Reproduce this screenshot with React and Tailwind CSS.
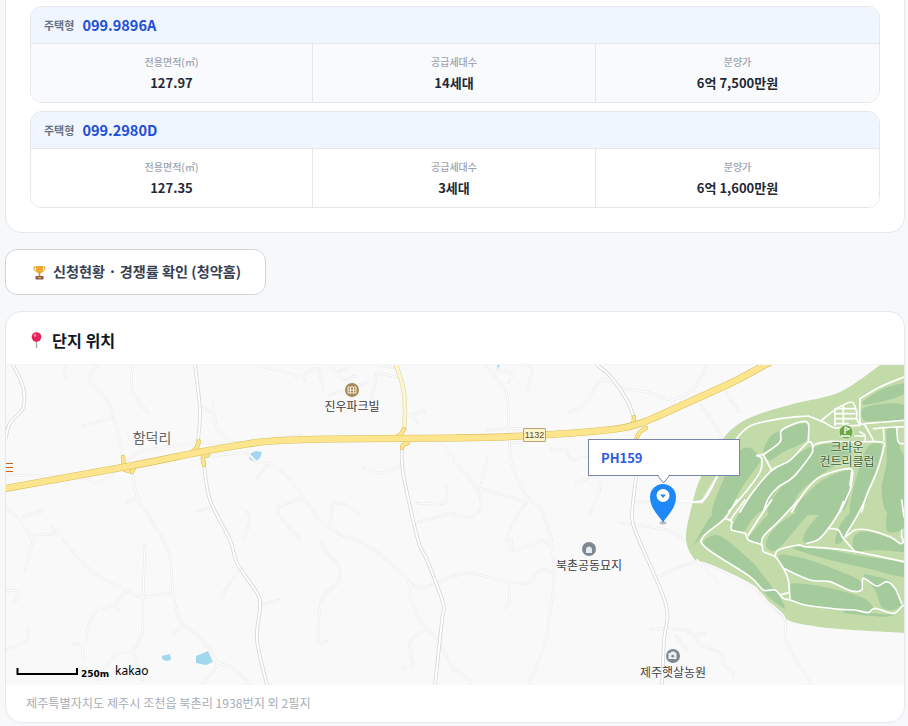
import React from "react";

function sm(p, closed = false) {
  const pts = [];
  for (let i = 0; i < p.length; i += 2) pts.push([p[i], p[i + 1]]);
  const n = pts.length;
  const at = (i) => (closed ? pts[(i + n) % n] : pts[Math.max(0, Math.min(n - 1, i))]);
  let d = `M${pts[0][0]} ${pts[0][1]}`;
  const last = closed ? n : n - 1;
  for (let i = 0; i < last; i++) {
    const a = at(i - 1), b = at(i), c = at(i + 1), e = at(i + 2);
    const k = 0.16;
    d += `C${(b[0] + (c[0] - a[0]) * k).toFixed(1)} ${(b[1] + (c[1] - a[1]) * k).toFixed(1)} ${(c[0] - (e[0] - b[0]) * k).toFixed(1)} ${(c[1] - (e[1] - b[1]) * k).toFixed(1)} ${c[0]} ${c[1]}`;
  }
  return d + (closed ? "Z" : "");
}

const thin = [
  [65,365,65,378],[97,365,90,380,107,400,116,425,123,457],[132,472,138,500,147,513,163,540],[133,365,132,390,148,413],
  [83,426,100,421,112,418],[213,403,217,427,230,442],[203,408,213,413],[200,443,247,442,300,435],
  [6,475,83,478,93,483,113,475,140,452,198,443],[200,458,243,453,257,462,273,465,293,483,320,520,337,533,357,540,383,557,410,583,410,595,420,620,437,640,454,670],
  [257,478,267,465],[303,498,283,505,278,513,300,540],[322,540,323,548,338,565,338,582,322,600,318,640,327,641],
  [33,540,25,570],[63,540,93,572,125,590,140,597,172,593],[125,592,113,605,97,610,88,627,85,643,73,644],[82,645,83,657],
  [145,545,143,597,142,633,133,650,115,655,97,680],[163,540,170,557,173,593,180,620,200,638,217,663,203,683],[217,663,233,668,250,685],
  [133,650,143,680],[240,570,227,587,222,597],[260,605,280,600],[173,633,182,627],[6,650,27,640,28,628],[6,590,18,592,15,602],[113,605,118,610],
  [408,583,420,588,437,583,454,575],[403,668,413,666,410,643,427,628],[6,508,20,520,30,537],[23,517,42,511],[33,535,57,533,52,528],
  [127,502,138,498],[197,511,210,508],[247,512,250,520,243,540],[363,467,380,473,400,467],[417,503,445,503,446,487],[418,522,454,513],
  [410,415,425,411],[410,415,417,422],[343,503,358,513],[332,503,343,503],[332,503,330,523,322,523],[257,365,290,373,300,377,317,368,323,390],[300,377,305,380],
  [330,365,343,380],[330,395,367,382],[338,372,350,366],[345,380,355,376],[377,373,372,398],[377,373,397,377],[380,365,393,368],[437,438,454,457],
  [484,365,506,392,509,432,511,460,524,493,541,510,552,540],[497,370,512,373,509,382],[526,365,532,370,527,390],
  [569,412,584,405,601,380,617,387,651,393,672,400,694,388,707,365],[672,400,674,410],[701,405,719,432,719,440],[726,392,739,412],
  [487,430,524,428],[511,443,524,442],[552,449,566,451,572,460,587,457],[576,483,597,477,599,493,589,515],
  [454,462,476,487,481,507,471,517,454,515],[476,487,526,502],[487,458,481,483],[526,502,511,527,507,540],[621,523,667,530,684,540],
  [454,577,469,573,511,582,529,582,541,570,552,572],[509,582,509,603,504,608],[544,540,552,550,554,583,549,617,546,640,529,685],
  [512,540,514,550,544,540],[454,668,467,678,471,685],[657,577,692,563,714,567,754,587,761,597,784,617,787,643,812,685],[697,560,717,582],
  [651,629,667,629,687,631,704,647,721,653,724,665,733,672,733,677],[676,635,686,650],[694,635,704,633],
  [637,502,702,502],[702,502,717,477],
];

const gray = [
  [13,365,23,387,23,408,10,423,6,437],
  [402,448,403,473,418,540,427,560,443,603,442,620,435,685],
  [597,365,611,377,627,400,634,418],
  [636,438,636,475,632,517,639,540,666,605,664,640,662,685],
  [195,365,200,410,198,441],
  [204,465,210,500,230,540,237,563,257,593,260,607,257,640,267,685],
];

const fair9 = [
  [545,125,600,85,672,65,672,95,600,120],
  [548,140,610,125,672,130,672,175,590,178,552,175],
  [250,270,270,225,305,205,360,185,385,190,380,235,310,270,270,295],
  [95,450,150,310,180,265,210,258,235,280,240,300,190,370,145,445],
  [185,450,240,360,290,320,390,255,395,285,340,340,290,385,250,445],
  [262,450,300,380,350,340,400,260,450,245,500,245,510,280,420,340,360,390,322,450],
  [345,450,420,360,510,325,510,385,480,450],
  [510,450,520,380,560,260,605,250,590,320,560,390,540,450],
  [620,205,650,205,660,260,672,290,672,450,620,450,605,380,620,300],
];
const fair10 = [
  [75,120,105,105,140,120,210,180,245,220,280,270,250,270,210,230,80,145],
  [240,255,285,270,315,325,270,295],
  [330,260,345,250,430,260,510,280,560,300,580,325,565,338,480,328,375,315,330,300],
  [500,330,580,340,640,345,600,350,500,340],
  [300,165,370,175,470,210,545,245,545,270,510,272,450,245,390,240,310,205],
  [350,140,450,150,525,165,672,190,672,230,560,205,450,180,350,150],
  [525,105,565,95,630,115,660,135,672,130,672,155,600,150,525,150],
  [550,225,590,230,625,240,650,270,665,310,640,330,605,320,585,270],
  [155,85,210,0,270,0,215,60,190,95],
  [45,130,100,40,165,0,130,55,70,105],
  [215,100,280,30,345,0,300,55,250,105,240,130,210,120],
  [258,130,300,70,420,0,370,60,290,150],
  [375,130,380,90,460,0,490,0,465,50,420,110],
  [465,125,490,60,560,0,530,50,495,110,480,130],
  [620,90,630,0,665,0,672,60,665,90],
];
const white9 = [
  [145,450,205,380,240,330,245,290,230,280,250,278],[250,278,275,325],
  [180,450,215,395,275,325,330,295,385,240,400,255],
  [250,450,265,410,295,375,340,345,395,275,400,250,450,238,510,240,605,240,610,260,590,330,560,400,545,450],
  [335,450,370,395,420,345,510,320,515,360,510,385,490,430,480,450],
  [250,278,300,240,305,205,360,180,385,185,385,235],
  [385,162,300,170,215,190,170,230,130,310],[110,345,70,415,0,415],
  [385,162,430,180,465,198,500,192,540,190],
  [425,175,470,140,515,120,530,150,530,170,540,190],
  [540,110,600,75,672,45],[540,110,540,180,555,190,580,235],
  [555,185,672,175],[580,200,640,195,672,195],[610,195,612,235],[650,195,655,240,672,245],
  [465,140,525,140],[465,155,525,155],[465,170,528,170],[465,185,505,185],[490,130,490,190],[465,145,465,190],
  [540,210,555,220,555,240],[525,222,555,222],[515,330,510,370],
];
const white10 = [
  [170,0,135,55,70,110,80,145,210,230,250,270,285,270,310,295,330,300,375,315,480,328,525,330,565,338,585,325,640,340,665,320,672,315],
  [135,55,155,65,155,90,195,100,205,120,245,135,250,155,285,170,310,205,325,240,330,300],
  [195,0,155,55,155,65],[275,0,240,50,205,105],[355,0,300,60,250,110,245,135],
  [285,170,295,150,355,135,375,140,450,145,525,155,672,185],
  [490,5,470,50,420,115,380,130],[445,85,475,90,490,115,525,155],
  [555,0,530,50,495,110,525,90,565,90,630,110,660,130,672,125],
  [310,205,390,240,450,245,510,272,545,270,550,235,590,258,620,245,645,265,665,310],
  [300,285,325,278],[665,90,665,110,672,125],[665,0,672,50],
];

function Yellow({ d, w = 7 }) {
  return (
    <>
      <path d={d} fill="none" stroke="#d9bf5c" strokeWidth={w + 1.2} strokeLinecap="round" />
      <path d={d} fill="none" stroke="#fde58d" strokeWidth={w} strokeLinecap="round" />
    </>
  );
}

function MapArt() {
  const highway = sm([2,489,130,466,200,452,247,444,273,441,333,439,454,438,524,436,607,430,641,423,687,403,737,380,770,362]);
  const golfEdge = sm([884,362,840,392,793,404,747,419,722,440,701,477,692,505,686,540,697,562,710,565,753,585,783,617,813,626,853,630,906,633]) + "L906 362Z";
  return (
    <svg viewBox="6 365 898 320" className="block w-full h-full" aria-hidden="true">
      <rect x="6" y="365" width="898" height="320" fill="#f9f9fa" />
      {/* water */}
      <path d="M251 453l5-2 6 1-2 6-5 4-6-3z" fill="#a2d7ee" />
      <path d="M162 656l8-2 1 6-5 1-4-2z" fill="#a2d7ee" />
      <path d="M196 656l12-5 5 11-7 3-10-2z" fill="#a2d7ee" />
      <path d="M497 365h3l-2 4z" fill="#a2d7ee" />
      {/* golf */}
      <path d={golfEdge} fill="#c2dba8" />
      <g transform="translate(680 362) scale(0.3333)">
        {fair9.map((p, i) => <path key={i} d={sm(p, true)} fill="#a5cb9d" />)}
      </g>
      <g transform="translate(680 500) scale(0.3333)">
        {fair10.map((p, i) => <path key={i} d={sm(p, true)} fill="#a5cb9d" />)}
      </g>
      {/* thin roads */}
      {thin.map((p, i) => <path key={i} d={sm(p)} fill="none" stroke="#ebebec" strokeWidth="2.6" strokeLinecap="round" />)}
      {thin.map((p, i) => <path key={i} d={sm(p)} fill="none" stroke="#fdfdfd" strokeWidth="1.2" strokeLinecap="round" />)}
      {gray.map((p, i) => <path key={i} d={sm(p)} fill="none" stroke="#d6d6d7" strokeWidth="3.6" strokeLinecap="round" />)}
      {gray.map((p, i) => <path key={i} d={sm(p)} fill="none" stroke="#ffffff" strokeWidth="2" strokeLinecap="round" />)}
      <g transform="translate(680 362) scale(0.3333)" fill="none" stroke="#ffffff" strokeWidth="5" strokeLinecap="round" strokeLinejoin="round">
        {white9.map((p, i) => <path key={i} d={sm(p)} />)}
      </g>
      <g transform="translate(680 500) scale(0.3333)" fill="none" stroke="#ffffff" strokeWidth="5" strokeLinecap="round" strokeLinejoin="round">
        {white10.map((p, i) => <path key={i} d={sm(p)} />)}
      </g>
      {/* pale yellow road */}
      <path d={sm([395,362,403,387,405,410,404,430])} fill="none" stroke="#e3dca8" strokeWidth="4.4" />
      <path d={sm([395,362,403,387,405,410,404,430])} fill="none" stroke="#fdf6d2" strokeWidth="3" />
      {/* ramps */}
      {[
        [123,457,124,468],[125,470,132,472],[132,472,135,466],
        [199,441,197,447,193,451],[204,465,203,457,208,455],
        [404,429,401,434,396,437],[402,448,403,445,408,443],
        [634,417,633,423,627,426],[637,437,640,432,646,428],
      ].map((p, i) => <Yellow key={i} d={sm(p)} w={3.2} />)}
      <Yellow d={highway} w={6} />
      {/* clipped road sign */}
      <path d="M6 463.5h7M6 467.5h7M6 471.5h7" stroke="#d0610a" strokeWidth="1" />
      {/* POI icons */}
      <circle cx="352" cy="390" r="7" fill="#a58957" />
      <path d="M348 387h8v6h-8zM350.5 387v6M353.5 387v6M348 390h8" fill="none" stroke="#f5eee0" strokeWidth="1" />
      <circle cx="846" cy="432" r="7" fill="#6da744" stroke="#fff" strokeWidth="0.6" />
      <path d="M845 427v7M845 427l4 2-4 2M841 436h9" fill="none" stroke="#fff" strokeWidth="1.3" />
      <circle cx="589" cy="549" r="7" fill="#7d8893" />
      <path d="M586 553v-3a3 3.5 0 0 1 6 0v3z" fill="#e9ecef" />
      <circle cx="673" cy="656" r="7" fill="#7d8893" />
      <path d="M669 653.500h2l1-1.500h3l1 1.500h1v6h-8z" fill="#eef0f2" transform="translate(-0.500 -0.500)" />
      <circle cx="672.700" cy="656.200" r="1.400" fill="#7d8893" />
      {/* marker */}
      <ellipse cx="663" cy="523" rx="3.500" ry="1.400" fill="#000" opacity="0.25" />
      <path d="M663 523c-2-6-13-13-13-26a13 13 0 0 1 26 0c0 13-11 20-13 26z" fill="#1e88f7" />
      <circle cx="663" cy="495.500" r="6.500" fill="#fff" />
      <path d="M660 494.500h6l-3 3.500z" fill="#1e88f7" />
      {/* scale */}
      <path d="M17.500 668v6h59.500v-6" fill="none" stroke="#000" strokeWidth="2" />
    </svg>
  );
}

function Label({ className, children }) {
  return <span className={`absolute -translate-x-1/2 whitespace-nowrap ${className}`}>{children}</span>;
}

function Stat({ label, value, last }) {
  return (
    <div className={`flex flex-col items-center pt-[10px] pb-[9px] ${last ? "" : "border-r border-[#e5e7eb]"}`}>
      <span className="text-[10px] leading-[16px] font-medium text-[#9ca3af]">{label}</span>
      <span className="text-[13px] leading-[21px] mt-[2px] font-bold text-[#1f2937]">{value}</span>
    </div>
  );
}

function TypeCard({ type, area, units, price, rowClass }) {
  return (
    <div className="border border-[#e5e7eb] rounded-xl overflow-hidden">
      <div className="flex items-center gap-2 h-[37px] px-[13px] bg-[#eff6ff] border-b border-[#e5e7eb]">
        <span className="text-[11px] font-semibold text-[#6b7280]">주택형</span>
        <span className="text-[14.5px] font-bold text-[#1d4ed8]">{type}</span>
      </div>
      <div className={`grid grid-cols-[282px_283px_1fr] ${rowClass}`}>
        <Stat label="전용면적(㎡)" value={area} />
        <Stat label="공급세대수" value={units} />
        <Stat label="분양가" value={price} last />
      </div>
    </div>
  );
}

export default function App() {
  return (
    <div className="h-[726px] overflow-hidden bg-[#f7f8fa] font-['Noto_Sans_CJK_KR','Noto_Sans',sans-serif]">
      <div className="w-[900px] ml-[5px] -mt-5 flex flex-col gap-4">
        <section className="bg-white border border-[#e5e7eb] rounded-2xl px-6 pt-[25px] pb-6 flex flex-col gap-2">
          <TypeCard type="099.9896A" area="127.97" units="14세대" price="6억 7,500만원" rowClass="bg-[#f9fafb]" />
          <TypeCard type="099.2980D" area="127.35" units="3세대" price="6억 1,600만원" rowClass="bg-white" />
        </section>

        <button className="self-start flex items-center gap-[7px] h-[46px] w-[261px] pl-[27px] bg-white border border-[#d1d5db] rounded-xl text-[14.15px] font-bold text-[#374151] whitespace-nowrap">
          <svg width="13" height="15" viewBox="0 0 13 15" aria-hidden="true">
            <path d="M1 2h3v4H3C2 6 1 5 1 3zM12 2H9v4h1c1 0 2-1 2-3z" fill="none" stroke="#d99a2b" strokeWidth="1" />
            <path d="M3 1h7v4c0 2-1.500 3.500-3.500 3.500S3 7 3 5z" fill="#f0aa2e" />
            <rect x="5.700" y="8" width="1.600" height="3" fill="#d68d22" />
            <rect x="2.500" y="11" width="8" height="3.500" rx="0.500" fill="#8d5a4e" />
            <rect x="5" y="12" width="3" height="1.200" fill="#e0b05a" />
          </svg>
          신청현황 · 경쟁률 확인 (청약홈)
        </button>

        <section className="bg-white border border-[#e5e7eb] rounded-2xl overflow-hidden">
          <div className="flex items-center gap-[9px] h-[53px] pt-[4px] px-6 border-b border-[#f3f4f6]">
            <svg width="13" height="16" viewBox="0 0 13 16" aria-hidden="true">
              <path d="M6.500 8v8" stroke="#a9a9a9" strokeWidth="1.400" />
              <circle cx="6.500" cy="5" r="4.800" fill="#e6245c" />
              <circle cx="5" cy="3.400" r="1.300" fill="#f78aa8" />
            </svg>
            <h2 className="text-[16.2px] font-bold text-[#111827]">단지 위치</h2>
          </div>
          <div className="relative h-[320px] overflow-hidden">
            <MapArt />
            <Label className="left-[346px] top-[33px] text-[12px] leading-[16px] text-[#3f3a36] [text-shadow:0_0_2px_#fff]">진우파크빌</Label>
            <Label className="left-[146px] top-[62px] text-[14px] leading-[20px] text-[#666666] [text-shadow:0_0_2px_#fff]">함덕리</Label>
            <Label className="left-[583px] top-[192px] text-[12px] leading-[16px] text-[#3f4347] [text-shadow:0_0_2px_#fff]">북촌공동묘지</Label>
            <Label className="left-[667px] top-[299px] text-[12px] leading-[16px] text-[#3f4347] [text-shadow:0_0_2px_#fff]">제주햇살농원</Label>
            <Label className="left-[841px] top-[75px] text-[12px] leading-[14px] text-[#35632a] [text-shadow:0_0_2px_#fff,0_0_2px_#fff]">크라운</Label>
            <Label className="left-[841px] top-[89px] text-[12px] leading-[14px] text-[#35632a] [text-shadow:0_0_2px_#fff,0_0_2px_#fff]">컨트리클럽</Label>
            <span className="absolute left-[517px] top-[63px] w-[23px] h-[14px] flex items-center justify-center bg-[#fdf4cc] border border-[#b9a376] rounded-[1px] text-[9px] leading-none text-[#5c4c2c] font-['Liberation_Sans',sans-serif]">1132</span>
            <div className="absolute left-[582px] top-[74px] w-[152px] h-[37px] bg-white border border-[#7b84ab] pl-3 flex items-center text-[13px] font-bold text-[#2b5be3]">PH159</div>
            <svg className="absolute left-[651px] top-[110px]" width="14" height="10" viewBox="0 0 14 10" aria-hidden="true">
              <path d="M1 0l5.500 8L12 0z" fill="#fff" />
              <path d="M1 1l5.500 7L12 1" fill="none" stroke="#7b84ab" />
            </svg>
            <span className="absolute left-[75px] top-[302px] text-[9px] leading-[14px] font-bold text-black font-['DejaVu_Sans',sans-serif]">250m</span>
            <span className="absolute left-[109px] top-[297px] text-[12px] leading-[18px] text-black font-['Noto_Sans',sans-serif]">kakao</span>
          </div>
          <div className="h-[37px] px-5 flex items-center text-[12.15px] text-[#a8adb7]">제주특별자치도 제주시 조천읍 북촌리 1938번지 외 2필지</div>
        </section>
      </div>
    </div>
  );
}
